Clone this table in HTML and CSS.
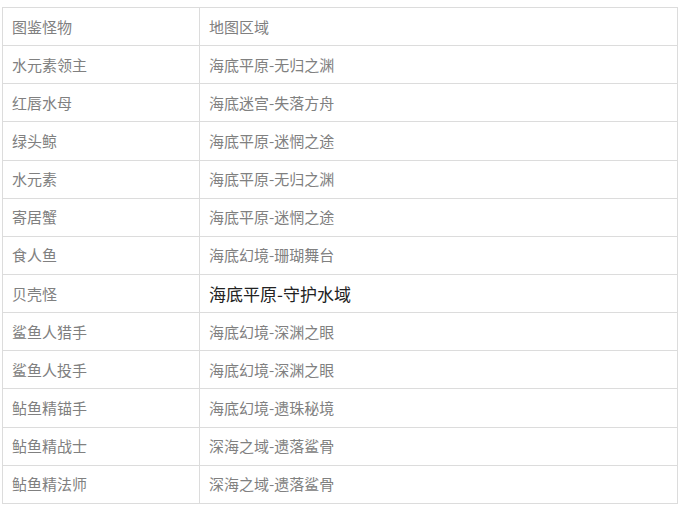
FILE: index.html
```html
<!DOCTYPE html>
<html lang="zh">
<head>
<meta charset="utf-8">
<link rel="stylesheet" href="styles.css">
</head>
<body>
<table class="monster-table">
  <tbody>
    <tr><td class="col-name">图鉴怪物</td><td>地图区域</td></tr>
    <tr><td class="col-name">水元素领主</td><td>海底平原-无归之渊</td></tr>
    <tr><td class="col-name">红唇水母</td><td>海底迷宫-失落方舟</td></tr>
    <tr><td class="col-name">绿头鲸</td><td>海底平原-迷惘之途</td></tr>
    <tr><td class="col-name">水元素</td><td>海底平原-无归之渊</td></tr>
    <tr><td class="col-name">寄居蟹</td><td>海底平原-迷惘之途</td></tr>
    <tr><td class="col-name">食人鱼</td><td>海底幻境-珊瑚舞台</td></tr>
    <tr><td class="col-name">贝壳怪</td><td class="strong">海底平原-守护水域</td></tr>
    <tr><td class="col-name">鲨鱼人猎手</td><td>海底幻境-深渊之眼</td></tr>
    <tr><td class="col-name">鲨鱼人投手</td><td>海底幻境-深渊之眼</td></tr>
    <tr><td class="col-name">鲇鱼精锚手</td><td>海底幻境-遗珠秘境</td></tr>
    <tr><td class="col-name">鲇鱼精战士</td><td>深海之域-遗落鲨骨</td></tr>
    <tr><td class="col-name">鲇鱼精法师</td><td>深海之域-遗落鲨骨</td></tr>
  </tbody>
</table>
</body>
</html>
```

FILE: styles.css
```css
html, body {
  margin: 0;
  padding: 0;
  background: #ffffff;
}
body {
  padding: 7px 0 0 2px;
  font-family: "Noto Sans CJK SC", "Liberation Sans", sans-serif;
}
.monster-table {
  border-collapse: collapse;
  width: 676px;
  table-layout: fixed;
}
.monster-table td {
  border: 1px solid #dcdcdc;
  padding: 0 9px;
  height: 37.15px;
  font-size: 15px;
  line-height: 20px;
  color: #808080;
  vertical-align: middle;
  white-space: nowrap;
}
.monster-table td.col-name {
  width: 178px;
}
.monster-table td.strong {
  font-size: 17px;
  color: #222222;
}
```
